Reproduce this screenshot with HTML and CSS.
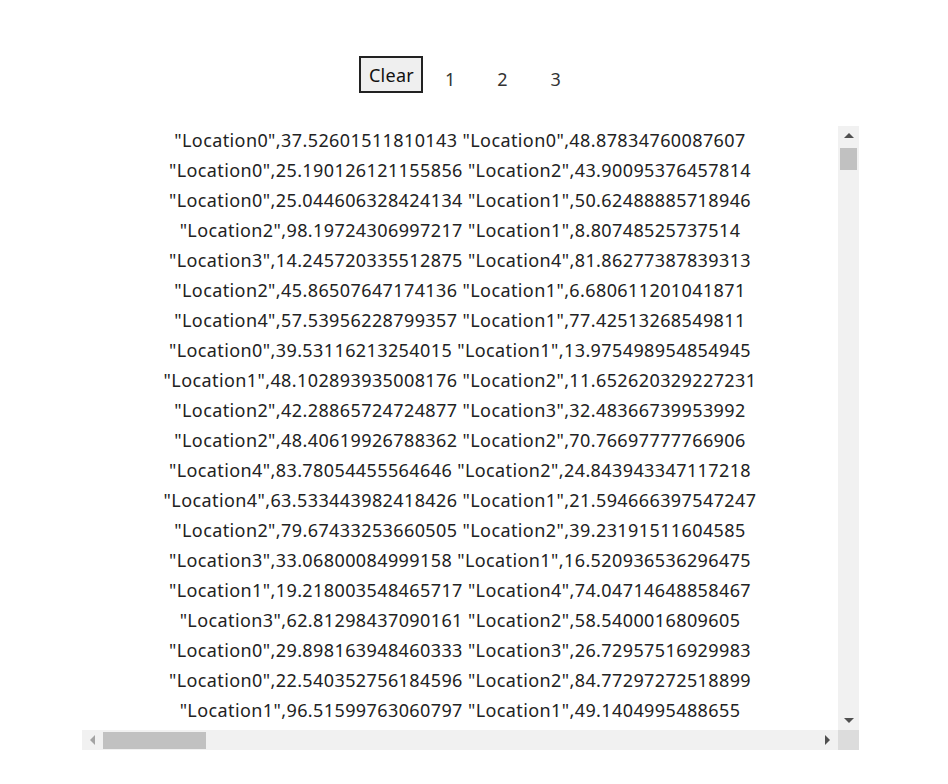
FILE: index.html
```html
<!DOCTYPE html>
<html>
<head>
<meta charset="utf-8">
<link rel="stylesheet" href="styles.css">
</head>
<body>
<div class="controls">
  <button class="clear">Clear</button>
  <span class="page">1</span>
  <span class="page">2</span>
  <span class="page">3</span>
</div>
<div class="box">
  <div class="viewport">
    <div class="line">"Location0",37.52601511810143 "Location0",48.87834760087607</div>
    <div class="line">"Location0",25.190126121155856 "Location2",43.90095376457814</div>
    <div class="line">"Location0",25.044606328424134 "Location1",50.62488885718946</div>
    <div class="line">"Location2",98.19724306997217 "Location1",8.80748525737514</div>
    <div class="line">"Location3",14.245720335512875 "Location4",81.86277387839313</div>
    <div class="line">"Location2",45.86507647174136 "Location1",6.680611201041871</div>
    <div class="line">"Location4",57.53956228799357 "Location1",77.42513268549811</div>
    <div class="line">"Location0",39.53116213254015 "Location1",13.975498954854945</div>
    <div class="line">"Location1",48.102893935008176 "Location2",11.652620329227231</div>
    <div class="line">"Location2",42.28865724724877 "Location3",32.48366739953992</div>
    <div class="line">"Location2",48.40619926788362 "Location2",70.76697777766906</div>
    <div class="line">"Location4",83.78054455564646 "Location2",24.843943347117218</div>
    <div class="line">"Location4",63.533443982418426 "Location1",21.594666397547247</div>
    <div class="line">"Location2",79.67433253660505 "Location2",39.23191511604585</div>
    <div class="line">"Location3",33.06800084999158 "Location1",16.520936536296475</div>
    <div class="line">"Location1",19.218003548465717 "Location4",74.04714648858467</div>
    <div class="line">"Location3",62.81298437090161 "Location2",58.5400016809605</div>
    <div class="line">"Location0",29.898163948460333 "Location3",26.72957516929983</div>
    <div class="line">"Location0",22.540352756184596 "Location2",84.77297272518899</div>
    <div class="line">"Location1",96.51599763060797 "Location1",49.1404995488655</div>
  </div>
  <div class="vbar">
    <span class="arrow up"></span>
    <span class="vthumb"></span>
    <span class="vspace"></span>
    <span class="arrow down"></span>
  </div>
  <div class="hbar">
    <span class="arrow left"></span>
    <span class="hthumb"></span>
    <span class="hspace"></span>
    <span class="arrow right"></span>
  </div>
  <div class="corner"></div>
</div>
</body>
</html>
```
FILE: styles.css
```css
html, body {
  margin: 0;
  padding: 0;
  background: #ffffff;
}
body {
  font-family: "Noto Sans", "Open Sans", sans-serif;
  color: #222222;
  width: 948px;
  height: 784px;
  overflow: hidden;
}
.controls {
  display: flex;
  align-items: flex-end;
  margin: 56px 0 0 359px;
  height: 37px;
}
.clear {
  font-family: "Noto Sans", "Open Sans", sans-serif;
  font-size: 18px;
  letter-spacing: 0.3px;
  color: #111111;
  background: #efefef;
  border: 2px solid #222222;
  width: 64px;
  height: 37px;
  padding: 0 0 0 1px;
  margin: 0;
}
.page {
  font-size: 18px;
  line-height: 20px;
  margin-bottom: 4px;
  color: #333333;
}
.page:nth-child(2) { margin-left: 22px; }
.page:nth-child(3) { margin-left: 42px; }
.page:nth-child(4) { margin-left: 43px; }
.box {
  margin: 33px 0 0 82px;
  width: 777px;
  height: 624px;
  display: grid;
  grid-template-columns: 756px 21px;
  grid-template-rows: 604px 20px;
}
.viewport {
  overflow: hidden;
  text-align: center;
}
.line {
  font-size: 18px;
  letter-spacing: 0.4px;
  line-height: 30px;
  white-space: nowrap;
  color: #222222;
}
.line:first-child {
  margin-top: -1px;
}
.vbar {
  background: #f1f1f1;
  display: flex;
  flex-direction: column;
  align-items: center;
}
.hbar {
  background: #f1f1f1;
  display: flex;
  align-items: center;
}
.corner {
  background: #dcdcdc;
}
.arrow {
  width: 0;
  height: 0;
  flex: none;
}
.up {
  margin-top: 7px;
  border-left: 5px solid transparent;
  border-right: 5px solid transparent;
  border-bottom: 5px solid #505050;
}
.down {
  margin-bottom: 7px;
  border-left: 5px solid transparent;
  border-right: 5px solid transparent;
  border-top: 5px solid #505050;
}
.left {
  margin-left: 8px;
  border-top: 5px solid transparent;
  border-bottom: 5px solid transparent;
  border-right: 5px solid #a3a3a3;
}
.right {
  margin-right: 8px;
  border-top: 5px solid transparent;
  border-bottom: 5px solid transparent;
  border-left: 5px solid #505050;
}
.vthumb {
  margin-top: 10px;
  width: 17px;
  height: 22px;
  background: #c1c1c1;
  flex: none;
}
.vspace, .hspace {
  flex: 1;
}
.hthumb {
  margin-left: 8px;
  width: 103px;
  height: 17px;
  background: #c1c1c1;
  flex: none;
}
```
